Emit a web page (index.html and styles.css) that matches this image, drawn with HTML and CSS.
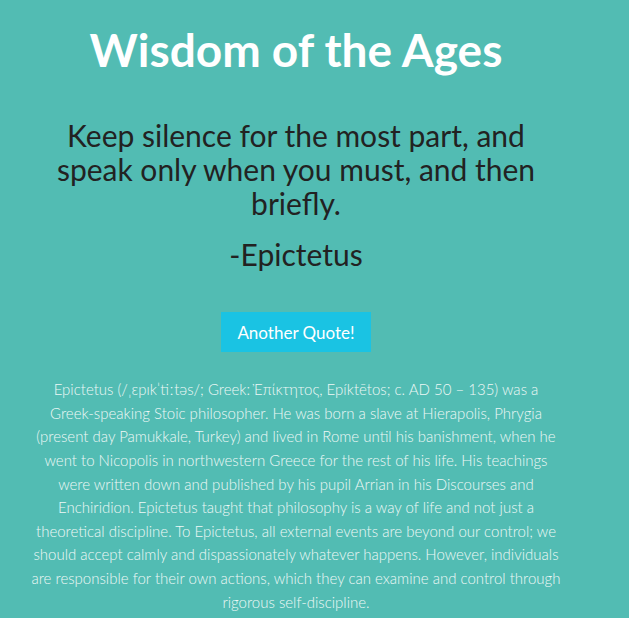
FILE: index.html
```html
<!DOCTYPE html>
<html lang="en">
<head>
<meta charset="utf-8">
<title>Wisdom of the Ages</title>
<link rel="stylesheet" href="styles.css">
</head>
<body>
<main class="page">
  <h1 class="title">Wisdom of the Ages</h1>
  <blockquote class="quote">
    <p class="quote-text">Keep silence for the most part, and speak only when you must, and then briefly.</p>
    <p class="quote-author">-Epictetus</p>
  </blockquote>
  <button class="btn" type="button">Another Quote!</button>
  <p class="bio">Epictetus (/ˌɛpɪkˈtiːtəs/; Greek: Ἐπίκτητος, Epíktētos; c. AD 50 – 135) was a <span class="nowrap">Greek-speaking</span> Stoic philosopher. He was born a slave at Hierapolis, Phrygia (present day Pamukkale, Turkey) and lived in Rome until his banishment, when he went to Nicopolis in northwestern Greece for the rest of his life. His teachings were written down and published by his pupil Arrian in his Discourses and Enchiridion. Epictetus taught that philosophy is a way of life and not just a theoretical discipline. To Epictetus, all external events are beyond our control; we should accept calmly and dispassionately whatever happens. However, individuals are responsible for their own actions, which they can examine and control through rigorous <span class="nowrap">self-discipline.</span></p>
</main>
</body>
</html>
```

FILE: styles.css
```css
html, body {
  margin: 0;
  padding: 0;
  background: #52bcb3;
}

body {
  font-family: Lato, "Open Sans", sans-serif;
  overflow: hidden;
}

.page {
  width: 592px;
  display: flex;
  flex-direction: column;
  align-items: center;
  text-align: center;
}

.title {
  margin: 22px 0 0;
  font-size: 46px;
  font-weight: 700;
  line-height: 1.2;
  color: #ffffff;
}

.quote {
  margin: 41px 0 0;
  width: 500px;
  color: #222222;
}

.quote-text {
  margin: 0;
  font-size: 30px;
  line-height: 34px;
}

.quote-author {
  margin: 17px 0 0;
  font-size: 30px;
  line-height: 34px;
}

.btn {
  margin-top: 41px;
  height: 40px;
  padding: 0 16px;
  border: none;
  background: #1ac3e3;
  color: #ffffff;
  font-family: Lato, sans-serif;
  font-size: 17px;
  cursor: pointer;
}

.bio {
  margin: 26px 0 0;
  padding: 0 28px;
  font-size: 15px;
  font-weight: 300;
  line-height: 23.6px;
  color: #eef8f6;
}

.nowrap {
  white-space: nowrap;
}
```
